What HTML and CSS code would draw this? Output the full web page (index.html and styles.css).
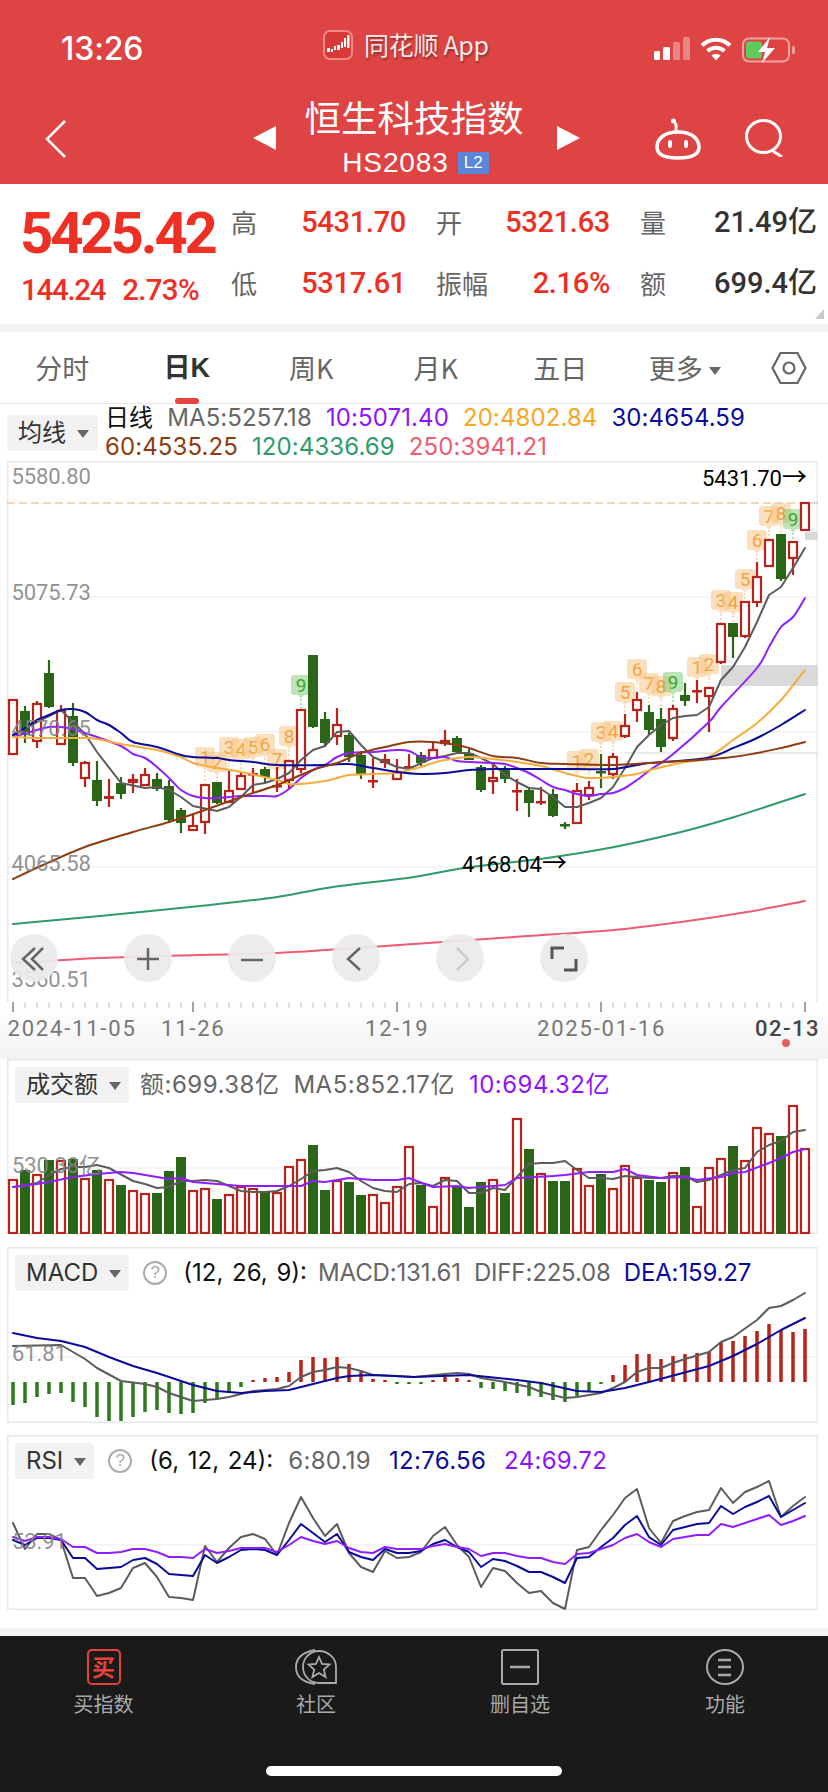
FILE: index.html
```html
<!DOCTYPE html>
<html lang="zh-CN">
<head>
<meta charset="utf-8">
<title>恒生科技指数</title>
<link rel="stylesheet" href="styles.css">
</head>
<body>
<div class="page">
  <header class="topbar">
    <div class="status">
      <span class="clock">13:26</span>
      <div class="app-tag">
        <svg class="app-logo" viewBox="0 0 30 30" width="30" height="30"><rect x="1" y="1" width="28" height="28" rx="6" fill="#d93a38" stroke="#f08a88" stroke-width="2"/><g fill="#fff"><rect x="4" y="18" width="3" height="4"/><rect x="8" y="19" width="2" height="3"/><rect x="11" y="16" width="2" height="4"/><rect x="14" y="15" width="3" height="5"/><rect x="18" y="12" width="2" height="6"/><rect x="21" y="8" width="2" height="9"/><rect x="24" y="5" width="2.500" height="13"/></g></svg>
        <span class="app-name">同花顺 App</span>
      </div>
      <div class="sys-icons">
        <svg viewBox="0 0 36 23" width="36" height="23"><rect x="0" y="14" width="6" height="9" rx="1.500" fill="#fff"/><rect x="9" y="10" width="7" height="13" rx="1.500" fill="#fff"/><rect x="19" y="5" width="7" height="18" rx="1.500" fill="#fff" opacity=".35"/><rect x="29" y="0" width="7" height="23" rx="1.500" fill="#fff" opacity=".35"/></svg>
        <svg viewBox="0 0 32 24" width="32" height="24" fill="none" stroke="#fff" stroke-width="4"><path d="M2 8.500a20 20 0 0 1 28 0"/><path d="M7.500 14a12.500 12.500 0 0 1 17 0"/><path d="M16 23.500l-4.500-5a6.500 6.500 0 0 1 9 0z" fill="#fff" stroke="none"/></svg>
        <svg viewBox="0 0 54 26" width="54" height="26"><rect x="1" y="1.500" width="46" height="23" rx="6" fill="none" stroke="#fff" stroke-opacity=".5" stroke-width="2"/><rect x="4" y="4.500" width="16" height="17" rx="3" fill="#5ecb5c"/><rect x="50" y="9" width="3" height="8" rx="1.500" fill="#fff" opacity=".5"/><path d="M28 0L16 15h7l-3 11 13-15h-8z" fill="#fff"/></svg>
      </div>
    </div>
    <nav class="navrow">
      <svg class="ic-back" viewBox="0 0 22 38" width="22" height="38" fill="none" stroke="#fff" stroke-width="2.500"><path d="M20 1L2 19l18 18"/></svg>
      <span class="tri tri-left"></span>
      <div class="title-block">
        <h1 class="title">恒生科技指数</h1>
        <div class="code"><span>HS2083</span><span class="l2">L2</span></div>
      </div>
      <span class="tri tri-right"></span>
      <svg class="ic-robot" viewBox="0 0 46 42" width="46" height="42" fill="none" stroke="#fff" stroke-width="3.500"><path d="M23 14C9 14 2 21 2 29c0 8 7 11 21 11s21-3 21-11c0-8-7-15-21-15z"/><path d="M21 13c0-4 1-6 -1-8" stroke-width="3"/><circle cx="18.500" cy="3" r="2.500" fill="#fff" stroke="none"/><rect x="13" y="22" width="4" height="8" rx="2" fill="#fff" stroke="none"/><rect x="29" y="22" width="4" height="8" rx="2" fill="#fff" stroke="none"/></svg>
      <svg class="ic-search" viewBox="0 0 39 38" width="39" height="38" fill="none" stroke="#fff" stroke-width="3"><ellipse cx="18.500" cy="17.500" rx="17" ry="16"/><path d="M28 32l9 6"/></svg>
    </nav>
  </header>

  <section class="quote">
    <div class="price-block">
      <div class="price">5425.42</div>
      <div class="change"><span>144.24</span><span>2.73%</span></div>
    </div>
    <div class="stats">
      <div class="stat"><span class="stat-k">高</span><span class="stat-v up">5431.70</span></div>
      <div class="stat"><span class="stat-k">开</span><span class="stat-v up">5321.63</span></div>
      <div class="stat"><span class="stat-k">量</span><span class="stat-v dark">21.49亿</span></div>
      <div class="stat"><span class="stat-k">低</span><span class="stat-v up">5317.61</span></div>
      <div class="stat"><span class="stat-k">振幅</span><span class="stat-v up">2.16%</span></div>
      <div class="stat"><span class="stat-k">额</span><span class="stat-v dark">699.4亿</span></div>
    </div>
    <span class="corner"></span>
  </section>

  <div class="strip"></div>

  <section class="tabs">
    <span class="tab">分时</span>
    <span class="tab active">日K</span>
    <span class="tab">周K</span>
    <span class="tab">月K</span>
    <span class="tab">五日</span>
    <span class="tab">更多<i class="caret caret-tab"></i></span>
    <svg class="ic-hex" viewBox="0 0 36 34" width="36" height="34" fill="none" stroke="#666" stroke-width="2.200"><path d="M9.500 2h17L34.500 17l-8 15h-17L1.500 17z"/><circle cx="18" cy="17" r="5.500"/></svg>
  </section>

  <section class="legend-row">
    <div class="selector sel-ma">均线<i class="caret"></i></div>
    <div class="legend">
      <div class="legend-line"><span class="lg-k">日线</span><span class="c-ma5">MA5:5257.18</span><span class="c-ma10">10:5071.40</span><span class="c-ma20">20:4802.84</span><span class="c-ma30">30:4654.59</span></div>
      <div class="legend-line"><span class="c-ma60">60:4535.25</span><span class="c-ma120">120:4336.69</span><span class="c-ma250">250:3941.21</span></div>
    </div>
  </section>

  <div class="frame frame-main">
    <svg id="kline" class="plot" viewBox="7 461 811 541" width="811" height="541">
      <g id="kline-plot"></g>
      <text class="tick" x="11.500" y="484">5580.80</text>
      <text class="tick" x="11.500" y="600">5075.73</text>
      <text class="tick" x="11.500" y="736">4570.65</text>
      <text class="tick" x="11.500" y="871">4065.58</text>
      <text class="tick" x="11.500" y="987">3560.51</text>
      <text class="extreme" x="702" y="486">5431.70<tspan class="arrow">→</tspan></text>
      <text class="extreme" x="462" y="872">4168.04<tspan class="arrow">→</tspan></text>
      <g id="kline-ctl" class="ctl">
        <circle cx="34" cy="958" r="24"/><path d="M35 948l-12 11 12 11M43 948l-11 11 11 11"/>
        <circle cx="148" cy="958" r="24"/><path d="M137 959h22M148 948v22"/>
        <circle cx="252" cy="958" r="24"/><path d="M241 960h22"/>
        <circle cx="356" cy="958" r="24"/><path d="M360 948l-12 11 12 11"/>
        <circle cx="460" cy="958" r="24"/><path class="off" d="M457 948l11 11-11 11"/>
        <circle cx="564" cy="958" r="24"/><path class="thick" d="M552 959v-11h12M576 959v11h-12"/>
      </g>
    </svg>
  </div>

  <div class="axis">
    <svg id="axis" viewBox="0 1002 828 56" width="828" height="56">
      <g id="axis-ticks"></g>
      <text class="date" x="7.500" y="1036">2024-11-05</text>
      <text class="date" x="161" y="1036">11-26</text>
      <text class="date" x="365" y="1036">12-19</text>
      <text class="date" x="537" y="1036">2025-01-16</text>
      <text class="date last" x="755" y="1036">02-13</text>
      <circle class="now-dot" cx="786" cy="1043" r="4"/>
    </svg>
  </div>

  <section class="frame panel panel-vol">
    <div class="panel-head">
      <div class="selector">成交额<i class="caret"></i></div>
      <span class="c-ma5">额:699.38亿</span><span class="c-ma5">MA5:852.17亿</span><span class="c-ma10">10:694.32亿</span>
    </div>
    <svg id="vol" class="plot" viewBox="7 1103 811 131" width="811" height="131">
      <g id="vol-plot"></g>
      <text class="tick" x="12" y="1173">530.38亿</text>
    </svg>
  </section>

  <section class="frame panel panel-macd">
    <div class="panel-head">
      <div class="selector">MACD<i class="caret"></i></div>
      <span class="help">?</span>
      <span class="params">(12, 26, 9):</span><span class="c-ma5">MACD:131.61</span><span class="c-ma5">DIFF:225.08</span><span class="c-ma30">DEA:159.27</span>
    </div>
    <svg id="macd" class="plot" viewBox="7 1291 811 132" width="811" height="132">
      <g id="macd-plot"></g>
      <text class="tick" x="12" y="1361">61.81</text>
    </svg>
  </section>

  <section class="frame panel panel-rsi">
    <div class="panel-head">
      <div class="selector">RSI<i class="caret"></i></div>
      <span class="help">?</span>
      <span class="params">(6, 12, 24):</span><span class="c-ma5">6:80.19</span><span class="c-ma30">12:76.56</span><span class="c-ma10">24:69.72</span>
    </div>
    <svg id="rsi" class="plot" viewBox="7 1479 811 131" width="811" height="131">
      <g id="rsi-plot"></g>
      <text class="tick" x="12" y="1549">53.91</text>
    </svg>
  </section>

  <div class="strip strip-low"></div>

  <footer class="dock">
    <div class="dock-items">
      <div class="dock-item buy">
        <span class="buy-icon">买</span>
        <span class="dock-label">买指数</span>
      </div>
      <div class="dock-item">
        <svg viewBox="0 0 42 36" width="42" height="36" fill="none" stroke="#aaa" stroke-width="1.800"><path d="M20 1C4 4 1 12 1 18c0 8 5 15 19 17"/><path d="M41 34H24C15 34 8 27 8 18S15 2 24 2s17 7 17 16z"/><path d="M24 8l3 7 7.500.6-5.700 5 1.800 7.400L24 24l-6.600 4 1.800-7.400-5.700-5 7.500-.6z"/></svg>
        <span class="dock-label">社区</span>
      </div>
      <div class="dock-item">
        <svg viewBox="0 0 38 36" width="38" height="36" fill="none" stroke="#aaa" stroke-width="2"><rect x="1" y="1" width="36" height="34" rx="1.500"/><path d="M9 18h20" stroke-width="2.500"/></svg>
        <span class="dock-label">删自选</span>
      </div>
      <div class="dock-item dock-last">
        <svg viewBox="0 0 38 36" width="38" height="36" fill="none" stroke="#aaa" stroke-width="2"><ellipse cx="19" cy="18" rx="18" ry="17"/><path d="M12 11h13M12 18h13M12 26h13" stroke-width="2.500"/></svg>
        <span class="dock-label">功能</span>
      </div>
    </div>
    <div class="home-bar"></div>
  </footer>
</div>
<script src="chart.js"></script>
</body>
</html>
```
FILE: styles.css
```css
* { box-sizing: border-box; margin: 0; padding: 0; }
html, body { background: #fff; }
body { width: 828px; height: 1792px; overflow: hidden; font-family: "Liberation Sans", "Noto Sans CJK SC", sans-serif; color: #333; }
.page { width: 828px; display: flex; flex-direction: column; }

/* header */
.topbar { height: 184px; background: #de4443; color: #fff; }
.status { height: 84px; display: grid; grid-template-columns: 262px 331px auto; padding: 30px 0 0 61px; }
.clock { font: 500 32px/38px Inter, sans-serif; letter-spacing: -.1px; }
.app-tag { display: flex; align-items: flex-start; gap: 11px; }
.app-name { font: 400 25px/28px "Noto Sans CJK SC", sans-serif; text-shadow: 1px 2px 2px rgba(0,0,0,.35); color: #fbeaea; letter-spacing: -.3px; }
.sys-icons { display: flex; align-items: flex-start; gap: 10px; padding-top: 7px; }
.navrow { display: flex; align-items: flex-start; padding-left: 45px; }
.ic-back { margin: 36px 186px 0 0; }
.tri { width: 0; height: 0; margin-top: 42px; border-style: solid; border-color: transparent; }
.tri-left { border-width: 12.500px 23px 12.500px 0; border-right-color: #fff; }
.tri-right { border-width: 12.500px 0 12.500px 23px; border-left-color: #fff; margin-left: 1px; }
.title-block { width: 280px; padding: 11px 4px 0 0; display: flex; flex-direction: column; align-items: center; }
.title { font: 400 36.500px/44px "Noto Sans CJK SC", sans-serif; }
.code { margin-top: 12px; display: flex; align-items: center; gap: 9px; font: 400 28px/24px "Liberation Sans", sans-serif; letter-spacing: .9px; padding-left: 3px; }
.l2 { width: 31px; height: 22px; background: #5b86d9; font-size: 17px; line-height: 22px; text-align: center; letter-spacing: 0; }
.ic-robot { margin: 34px 44px 0 75px; }
.ic-search { margin-top: 35px; }

/* quote */
.quote { position: relative; height: 140px; display: flex; background: #fff; }
.price-block { width: 231px; padding: 20px 0 0 20px; }
.price { font: 700 58px/58px Roboto, sans-serif; letter-spacing: -3.100px; color: #ee2f23; }
.change { display: flex; gap: 17px; margin-top: 10px; padding-left: 1px; font: 500 29.500px/36px Roboto, sans-serif; letter-spacing: -.7px; color: #ee2f23; }
.change span:first-child { letter-spacing: -1.300px; }
.stats { display: grid; grid-template-columns: 175px 174px 177px; column-gap: 30px; row-gap: 25px; padding-top: 20px; align-content: start; }
.stat { height: 36px; display: flex; justify-content: space-between; align-items: center; }
.stat-k { font: 400 26px/36px "Noto Sans CJK SC", sans-serif; color: #666; }
.stat-v { font: 500 29px/36px Roboto, "Noto Sans CJK SC", sans-serif; letter-spacing: -.3px; }
.up { color: #ee2f23; }
.dark { color: #333; letter-spacing: 0; }
.corner { position: absolute; right: 4px; bottom: 5px; width: 0; height: 0; border-style: solid; border-width: 0 0 10px 9px; border-color: transparent transparent #c9c9c9 transparent; }
.strip { height: 8px; background: #f4f4f4; }

/* tabs */
.tabs { height: 72px; display: flex; align-items: center; border-bottom: 1px solid #e6e6e6; position: relative; }
.tab { position: relative; width: 124.500px; height: 72px; font: 400 27px/72px "Noto Sans CJK SC", "Liberation Sans", sans-serif; color: #666; text-align: center; white-space: nowrap; }
.tab.active { font-family: "Liberation Sans", "Noto Sans CJK SC", sans-serif; font-weight: 700; color: #333; }
.tab.active::after { content: ""; position: absolute; left: 50%; margin-left: -12px; bottom: 0; width: 24px; height: 6px; border-radius: 3px; background: #e5453f; }
.ic-hex { margin-left: 24px; }
.caret { display: inline-block; width: 0; height: 0; margin-left: 11px; vertical-align: middle; border-style: solid; border-width: 8px 6px 0 6px; border-color: #666 transparent transparent transparent; }
.caret-tab { margin-left: 6px; }

/* legend */
.legend-row { height: 57px; display: flex; align-items: flex-start; }
.selector { height: 36px; padding: 0 8px 0 11px; background: #f2f2f2; border-radius: 4px; font: 400 24px/36px "Inter", "Noto Sans CJK SC", sans-serif; letter-spacing: 0; color: #333; white-space: nowrap; }
.sel-ma { margin: 11px 7px 0 7px; width: 91px; flex: none; }
.legend { flex: none; font: 400 24px/28.500px Inter, "Noto Sans CJK SC", sans-serif; letter-spacing: .1px; white-space: nowrap; }
.legend-line { display: flex; gap: 14px; }
.lg-k { color: #111; }
.c-ma5 { color: #666; }
.c-ma10 { color: #9013fe; }
.c-ma20 { color: #f5a623; }
.c-ma30 { color: #0a0a9c; }
.c-ma60 { color: #8f3c10; }
.c-ma120 { color: #2f9a6a; }
.c-ma250 { color: #ef5b70; }

/* frames */
.frame { width: 811px; margin-left: 7px; box-shadow: inset 0 0 0 1.500px #e8e8e8; background: #fff; }
.frame-main { height: 541px; box-shadow: inset 1.500px 1.500px 0 #e8e8e8, inset -1.500px 0 0 #e8e8e8; }
.plot { display: block; }
.axis { height: 57px; background: linear-gradient(#fff, #f2f2f2); }
.axis svg { display: block; }
.panel { padding-top: 8px; }
.panel-vol { height: 175px; }
.panel-macd { height: 176px; margin-top: 13px; }
.panel-rsi { height: 175px; margin-top: 12px; }
.panel-head { height: 36px; display: flex; align-items: center; gap: 14px; padding-left: 8px; font: 400 24px/36px Inter, "Noto Sans CJK SC", sans-serif; white-space: nowrap; }
.panel-vol .panel-head { letter-spacing: .5px; }
.panel-vol .selector { margin-right: -3px; }
.panel-macd .panel-head { gap: 13px; letter-spacing: -.15px; }
.panel-macd .help { margin: 0 3px 0 1px; }
.panel-macd .params { margin-right: -2px; letter-spacing: 0; }
.panel-rsi .panel-head { gap: 18px; letter-spacing: .3px; }
.panel-rsi .help { margin: 0 -1px 0 -4px; }
.panel-rsi .params { letter-spacing: 0; }
.help { width: 24px; height: 24px; margin: 0 2px 0 0; border: 2px solid #aaa; border-radius: 50%; color: #aaa; font: 400 17px/20px "Liberation Sans", sans-serif; text-align: center; letter-spacing: 0; }
.params { color: #111; word-spacing: 2px; margin-right: -3px; }
.strip-low { margin-top: 18px; }

/* svg marks */
.tick { font: 400 22px Roboto, "Noto Sans CJK SC", sans-serif; fill: #848484; fill-opacity: .9; letter-spacing: -.1px; }
.extreme { font: 400 22px Roboto, sans-serif; fill: #000; }
.arrow { font: 400 25px "Noto Sans CJK SC", sans-serif; }
.date { font: 400 22px Roboto, sans-serif; fill: #777; letter-spacing: 1.800px; }
.date.last { fill: #444; font-weight: 500; letter-spacing: 1.500px; }
.now-dot { fill: #e46060; }
.ctl circle { fill: #ebebeb; fill-opacity: .93; }
.ctl path { fill: none; stroke: #666; stroke-width: 2.500; }
.ctl path.off { stroke: #ccc; }
.ctl path.thick { stroke: #555; stroke-width: 3; }
.grid { stroke: #ececec; stroke-width: 1.200; }
.grid-dash { stroke: #dcb679; stroke-width: 1.200; stroke-dasharray: 8 4; }
.band { fill: #d9d9d9; }
.red-box { fill: #fff; stroke: #b9231a; stroke-width: 2.200; }
.red-fill { fill: #b9231a; }
.green-fill { fill: #2b6618; }
.wick-r { stroke: #b9231a; stroke-width: 2.200; }
.wick-g { stroke: #2b6618; stroke-width: 2.200; }
.ln { fill: none; stroke-width: 2; stroke-linejoin: round; stroke-linecap: round; }
.l-ma5 { stroke: #5c5c5c; }
.l-ma10 { stroke: #8f1fff; }
.l-ma20 { stroke: #f6ad3b; }
.l-ma30 { stroke: #0a0a9c; }
.l-ma60 { stroke: #8f3c10; }
.l-ma120 { stroke: #2f9a6a; }
.l-ma250 { stroke: #ef5b70; }
.tag-o { fill: #f7c68a; fill-opacity: .55; }
.tag-g { fill: #6cc263; fill-opacity: .45; }
.stem-o { stroke: #f9d6a8; stroke-width: 1.600; stroke-dasharray: 2 2; }
.stem-g { stroke: #a3dc9c; stroke-width: 1.600; stroke-dasharray: 2 2; }
.tag-t { font: 400 19px Roboto, sans-serif; text-anchor: middle; }
.tag-t-o { fill: #f4a441; }
.tag-t-g { fill: #3ea52f; }
.tk { stroke: #c4c4c4; stroke-width: 1; }
.tk-m { stroke: #999; stroke-width: 1.800; }

/* dock */
.dock { height: 156px; background: #1a1a1a; display: flex; flex-direction: column; }
.dock-items { display: grid; grid-template-columns: 207px 218px 190px 213px; padding-top: 13px; }
.dock-item { display: flex; flex-direction: column; align-items: center; }
.dock-item svg { display: block; }
.dock-last { padding-left: 7px; }
.buy-icon { width: 34px; height: 36px; border: 2px solid #e8403a; border-radius: 5px; font: 700 23px/31px "Noto Sans CJK SC", sans-serif; color: #e8403a; text-align: center; }
.dock-label { margin-top: 7px; font: 400 20px/24px "Noto Sans CJK SC", sans-serif; color: #a8a8a8; }
.home-bar { width: 296px; height: 10px; margin: auto auto 16px; border-radius: 5px; background: #fff; }
```
FILE: chart.js
```js
var NS = 'http://www.w3.org/2000/svg';
function el(p, tag, a, txt) {
  var e = document.createElementNS(NS, tag);
  for (var k in a) e.setAttribute(k, a[k]);
  if (txt !== undefined) e.textContent = txt;
  p.appendChild(e);
  return e;
}
function X(i) { return 13 + 12 * i; }
function line(p, pts, cls, w) {
  var s = pts.map(function (q) { return q[0] + ',' + q[1]; }).join(' ');
  var a = { points: s, 'class': 'ln ' + cls };
  if (w) a['stroke-width'] = w;
  el(p, 'polyline', a);
}
/* Catmull-Rom through the samples, for the slow moving averages */
function curve(p, pts, cls) {
  var d = 'M' + pts[0][0] + ' ' + pts[0][1];
  for (var i = 0; i < pts.length - 1; i++) {
    var a = pts[Math.max(i - 1, 0)], b = pts[i], c = pts[i + 1], e = pts[Math.min(i + 2, pts.length - 1)];
    d += 'C' + (b[0] + (c[0] - a[0]) / 6).toFixed(1) + ' ' + (b[1] + (c[1] - a[1]) / 6).toFixed(1) + ' ' +
         (c[0] - (e[0] - b[0]) / 6).toFixed(1) + ' ' + (c[1] - (e[1] - b[1]) / 6).toFixed(1) + ' ' + c[0] + ' ' + c[1];
  }
  el(p, 'path', { d: d, 'class': 'ln ' + cls });
}
function series(ys) { return ys.map(function (y, i) { return [X(i), y]; }); }
function box(p, x, w, top, bot, red) {
  if (red && bot - top > 3) {
    el(p, 'rect', { x: x - w / 2 + 1, y: top + 1, width: w - 2, height: bot - top - 2, 'class': 'red-box' });
  } else {
    var h = Math.max(bot - top, 2.5);
    el(p, 'rect', { x: x - w / 2, y: top, width: w, height: h, 'class': red ? 'red-fill' : 'green-fill' });
  }
}

/* [red?, bodyTop, bodyBottom, wickTop, wickBottom] */
var candles = [
[1,699,755,699,755],[0,711,735,706,743],[1,703,742,701,748],[0,673,707,660,708],[1,710,745,705,745],
[0,716,763,703,766],[1,762,779,761,787],[0,780,801,761,806],[1,796,799,779,807],[0,783,794,777,799],
[1,779,783,774,793],[1,774,786,768,786],[0,779,789,773,791],[0,786,820,780,823],[0,810,823,808,833],
[1,825,831,815,831],[1,784,823,784,834],[0,782,803,782,804],[1,790,803,771,803],[1,775,790,773,790],
[1,773,774,768,793],[0,769,777,767,783],[1,785,787,767,792],[1,760,781,760,789],[1,709,770,709,773],
[0,655,727,655,728],[0,719,743,712,747],[1,724,737,708,745],[0,735,757,733,762],[0,755,774,751,779],
[1,780,782,758,788],[1,759,763,754,768],[1,771,780,759,780],[1,766,769,754,769],[0,755,763,752,766],
[1,749,759,742,759],[1,740,744,730,746],[0,738,752,736,753],[0,753,760,749,760],[0,767,790,765,792],
[1,777,782,763,794],[0,769,779,766,783],[1,790,791,779,811],[0,790,803,787,817],[1,801,803,787,805],
[0,794,816,789,817],[0,824,826,822,829],[1,790,824,783,824],[1,787,796,781,800],[0,771,773,754,788],
[1,756,775,753,779],[1,725,737,714,738],[1,699,711,692,722],[0,712,730,705,735],[0,719,747,708,752],
[1,708,739,705,741],[0,695,701,683,706],[1,690,691,680,703],[1,687,697,687,732],[1,623,663,623,664],
[0,623,637,623,658],[1,601,637,601,638],[1,576,603,562,607],[1,539,567,539,567],[0,534,579,534,581],
[1,541,559,541,575],[1,502,531,502,531]];

/* [candle index, digit, bubble top] */
var tags = [
[16,1,747],[17,2,752],[18,3,737],[19,4,739],[20,5,737],[21,6,734],[22,7,749],[23,8,726],[24,9,675],
[47,1,751],[48,2,749],[49,3,722],[50,4,721],[51,5,682],[52,6,659],[53,7,673],[54,8,676],[55,9,672],
[57,1,657],[58,2,654],[59,3,590],[60,4,592],[61,5,569],[62,6,530],[63,7,506],[64,8,503],[65,9,509]];

var ma = {
'l-ma250': [[13,963],[100,958],[200,955],[277,953],[414,944],[514,937],[614,930],[681,922],[747,912],[805,901]],
'l-ma120': [[13,924],[100,916],[200,906],[277,897],[333,887],[414,877],[464,868],[547,858],[614,847],[681,832],[731,818],[805,794]],
'l-ma5': [[13,735],[37,722],[61,710],[85,734],[97,752],[121,783],[145,788],[157,787],[169,790],[181,797],[193,806],[217,811],[229,807],[241,797],[253,785],[265,783],[277,779],[289,773],[301,760],[313,750],[325,746],[337,732],[349,731],[361,745],[373,757],[385,762],[397,767],[409,769],[421,763],[433,758],[445,756],[457,753],[469,753],[481,758],[493,764],[505,775],[517,782],[529,788],[541,789],[553,797],[565,807],[577,807],[589,803],[601,798],[613,787],[625,768],[637,747],[649,735],[661,725],[673,718],[685,716],[697,715],[709,707],[721,680],[733,667],[745,647],[757,622],[769,595],[781,587],[793,568],[805,548]],
'l-ma10': [[13,737],[37,730],[49,727],[61,727],[73,729],[85,733],[97,737],[121,746],[133,754],[145,758],[157,767],[169,778],[181,790],[193,796],[205,798],[217,798],[229,797],[241,796],[265,796],[277,796],[289,789],[301,778],[313,770],[325,765],[337,757],[349,753],[373,752],[397,750],[409,751],[421,757],[433,758],[445,757],[457,761],[469,762],[493,763],[505,764],[517,768],[529,773],[541,780],[553,787],[565,790],[577,794],[589,796],[601,794],[613,793],[625,788],[637,780],[650,770],[672,755],[709,722],[721,707],[757,668],[769,647],[781,627],[793,617],[805,598]],
'l-ma20': [[13,737],[37,738],[61,738],[85,738],[97,739],[121,744],[157,750],[181,757],[193,763],[217,768],[241,772],[277,780],[289,784],[301,784],[325,781],[337,778],[349,775],[373,774],[397,773],[409,770],[421,767],[433,763],[445,760],[469,757],[493,759],[517,762],[541,766],[565,773],[577,776],[589,778],[613,777],[637,774],[650,770],[680,763],[707,758],[733,740],[757,723],[781,700],[805,670]],
'l-ma30': [[13,735],[25,728],[37,720],[49,715],[61,710],[73,709],[85,712],[97,720],[109,725],[121,733],[133,742],[157,747],[181,755],[193,757],[217,758],[229,760],[253,762],[277,765],[325,765],[349,764],[373,768],[397,772],[421,774],[445,773],[469,770],[493,769],[541,769],[577,769],[613,769],[637,765],[650,763],[707,758],[733,748],[757,738],[781,725],[805,710]],
'l-ma60': [[13,879],[43,865],[85,847],[133,832],[169,822],[205,810],[241,797],[277,785],[313,770],[337,763],[361,753],[385,747],[409,742],[433,742],[457,745],[469,748],[493,756],[517,758],[541,763],[565,764],[613,765],[650,763],[724,758],[757,753],[781,748],[805,742]]
};

/* main chart */
(function () {
  var p = document.getElementById('kline-plot');
  [597, 732, 867].forEach(function (y) { el(p, 'line', { x1: 7, x2: 818, y1: y, y2: y, 'class': 'grid' }); });
  el(p, 'line', { x1: 624, x2: 818, y1: 753, y2: 753, 'class': 'grid', style: 'stroke:#d8d8d8' });
  el(p, 'rect', { x: 721, y: 665, width: 97, height: 21, 'class': 'band' });
  el(p, 'rect', { x: 805, y: 532, width: 13, height: 8, 'class': 'band' });
  el(p, 'line', { x1: 7, x2: 818, y1: 503, y2: 503, 'class': 'grid-dash' });

  tags.forEach(function (t) {
    var x = X(t[0]), top = t[2], g = t[1] === 9, c = candles[t[0]];
    el(p, 'line', { x1: x, x2: x, y1: top + 24, y2: c[3], 'class': g ? 'stem-g' : 'stem-o' });
    el(p, 'path', { d: 'M' + (x - 7) + ' ' + top + 'h14a3 3 0 0 1 3 3v14a3 3 0 0 1 -3 3h-4l-3 4-3-4h-4a3 3 0 0 1 -3-3v-14a3 3 0 0 1 3-3z', 'class': g ? 'tag-g' : 'tag-o' });
    el(p, 'text', { x: x, y: top + 17, 'class': 'tag-t ' + (g ? 'tag-t-g' : 'tag-t-o') }, String(t[1]));
  });

  candles.forEach(function (c, i) {
    var x = X(i), red = !!c[0];
    el(p, 'line', { x1: x, x2: x, y1: c[3], y2: c[4], 'class': red ? 'wick-r' : 'wick-g' });
    box(p, x, 10, c[1], c[2], red);
  });

  Object.keys(ma).forEach(function (k) {
    if (k === 'l-ma5') line(p, ma[k], k); else curve(p, ma[k], k);
  });
})();

/* time axis */
(function () {
  var p = document.getElementById('axis-ticks');
  var majors = { 15: 1, 32: 1, 49: 1, 66: 1, 0: 1 };
  for (var i = 0; i <= 66; i++) {
    var x = X(i), m = majors[i];
    el(p, 'line', { x1: x, x2: x, y1: 1002, y2: m ? 1012 : 1008, 'class': m ? 'tk-m' : 'tk' });
  }
})();

/* amount */
(function () {
  var p = document.getElementById('vol-plot');
  var kinds = [1,0,1,0,1,0,1,0,1,0,1,1,0,0,0,1,1,0,1,1,1,0,1,1,1,0,0,1,0,0,1,1,1,1,0,1,1,0,0,0,1,0,1,0,1,0,0,1,1,0,1,1,1,0,0,1,0,1,1,1,0,1,1,1,0,1,1];
  var tops = [1179,1170,1174,1160,1160,1159,1178,1170,1179,1185,1190,1193,1193,1171,1157,1190,1188,1199,1194,1186,1188,1192,1192,1166,1159,1145,1190,1180,1182,1195,1194,1202,1186,1146,1185,1206,1177,1186,1207,1182,1179,1193,1118,1149,1173,1181,1181,1168,1185,1174,1188,1165,1177,1180,1182,1172,1167,1206,1167,1158,1146,1160,1127,1133,1136,1105,1148];
  el(p, 'line', { x1: 7, x2: 818, y1: 1168, y2: 1168, 'class': 'grid' });
  tops.forEach(function (t, i) { box(p, X(i), 10, t, 1234, !!kinds[i]); });
  line(p, [[13,1187],[37,1183],[49,1175],[61,1169],[73,1167],[85,1167],[97,1165],[109,1168],[133,1181],[145,1184],[157,1188],[169,1187],[181,1181],[193,1181],[205,1180],[217,1181],[229,1186],[241,1191],[253,1192],[265,1192],[277,1191],[289,1186],[301,1179],[313,1171],[325,1170],[337,1168],[349,1172],[361,1181],[373,1188],[385,1191],[397,1192],[409,1184],[421,1183],[433,1186],[445,1180],[457,1181],[469,1193],[481,1193],[493,1188],[505,1190],[517,1177],[529,1164],[541,1163],[553,1163],[565,1161],[577,1170],[589,1178],[601,1178],[613,1179],[625,1176],[637,1177],[649,1178],[661,1178],[673,1176],[685,1176],[697,1182],[709,1180],[721,1175],[733,1170],[745,1168],[757,1152],[769,1145],[781,1141],[793,1132],[805,1130]], 'l-ma5');
  line(p, [[13,1187],[37,1184],[49,1182],[73,1177],[97,1174],[121,1172],[133,1173],[157,1177],[169,1179],[181,1178],[193,1182],[217,1184],[241,1186],[289,1186],[301,1186],[313,1181],[325,1182],[349,1178],[373,1180],[397,1180],[409,1178],[414,1180],[433,1187],[457,1186],[469,1188],[493,1186],[505,1185],[517,1178],[553,1176],[565,1175],[589,1172],[613,1172],[625,1169],[637,1175],[661,1178],[685,1177],[697,1180],[721,1177],[733,1173],[745,1172],[769,1163],[781,1158],[793,1152],[805,1149]], 'l-ma10', 2.5);
})();

/* MACD */
(function () {
  var p = document.getElementById('macd-plot');
  var ends = [1405,1403,1397,1394,1393,1402,1407,1417,1421,1421,1417,1412,1410,1413,1414,1413,1403,1399,1393,1387,1380,1378,1377,1372,1360,1357,1358,1357,1364,1372,1379,1380,1384,1384,1383,1380,1377,1378,1380,1388,1389,1391,1393,1396,1397,1400,1402,1396,1392,1384,1375,1365,1354,1354,1359,1356,1354,1353,1352,1342,1341,1336,1331,1324,1330,1332,1329];
  el(p, 'line', { x1: 7, x2: 818, y1: 1357, y2: 1357, 'class': 'grid' });
  ends.forEach(function (y, i) {
    var red = y < 1382, t = Math.min(y, 1382), h = Math.abs(y - 1382);
    el(p, 'rect', { x: X(i) - 1.75, y: t, width: 3.5, height: Math.max(h, 2), 'class': red ? 'red-fill' : 'green-fill', style: red ? '' : 'fill:#2f7a1d' });
  });
  line(p, [[13,1346],[61,1345],[85,1359],[97,1368],[121,1381],[145,1384],[157,1387],[169,1393],[181,1397],[193,1401],[217,1399],[229,1397],[253,1391],[277,1389],[289,1386],[301,1377],[313,1372],[325,1370],[337,1367],[349,1368],[361,1371],[373,1375],[397,1376],[414,1377],[445,1374],[457,1373],[469,1374],[481,1378],[505,1382],[529,1387],[541,1392],[565,1398],[577,1397],[601,1393],[613,1388],[625,1382],[637,1372],[649,1368],[661,1368],[673,1363],[685,1359],[709,1352],[721,1342],[733,1337],[757,1320],[769,1308],[781,1306],[793,1300],[805,1293]], 'l-ma5');
  line(p, [[13,1333],[37,1338],[61,1341],[85,1347],[109,1357],[133,1366],[157,1373],[193,1385],[217,1391],[241,1393],[265,1391],[289,1390],[313,1384],[337,1378],[349,1376],[373,1375],[414,1377],[469,1375],[517,1380],[541,1383],[577,1391],[601,1392],[625,1388],[649,1382],[709,1366],[733,1356],[757,1344],[781,1330],[805,1318]], 'l-ma30');
})();

/* RSI */
(function () {
  var p = document.getElementById('rsi-plot');
  el(p, 'line', { x1: 7, x2: 818, y1: 1545, y2: 1545, 'class': 'grid' });
  var g = [1523,1549,1534,1534,1540,1578,1578,1596,1593,1588,1568,1563,1577,1597,1598,1600,1546,1562,1548,1537,1534,1539,1555,1523,1497,1518,1536,1524,1553,1567,1572,1551,1558,1557,1552,1536,1527,1545,1557,1587,1568,1571,1583,1593,1591,1603,1609,1550,1547,1530,1515,1498,1489,1528,1543,1521,1516,1512,1510,1488,1503,1492,1487,1481,1517,1506,1497];
  var b = [1540,1545,1538,1538,1540,1558,1558,1569,1568,1567,1560,1558,1564,1574,1575,1576,1555,1563,1557,1550,1549,1550,1555,1540,1524,1533,1542,1534,1552,1557,1560,1549,1553,1553,1551,1544,1540,1547,1552,1567,1559,1561,1566,1572,1572,1577,1583,1558,1557,1547,1538,1525,1516,1537,1545,1530,1527,1524,1523,1506,1514,1507,1502,1496,1517,1510,1503];
  var v = [1537,1541,1537,1537,1539,1547,1547,1553,1553,1552,1549,1549,1552,1557,1557,1558,1549,1553,1551,1548,1548,1548,1552,1545,1537,1541,1544,1541,1548,1552,1553,1547,1549,1549,1549,1546,1544,1547,1549,1556,1553,1553,1556,1558,1558,1562,1564,1554,1553,1549,1545,1538,1534,1542,1547,1539,1537,1535,1535,1524,1527,1523,1519,1515,1525,1521,1516];
  line(p, series(g), 'l-ma5');
  line(p, series(b), 'l-ma30');
  line(p, series(v), 'l-ma10', 2.5);
})();
```
